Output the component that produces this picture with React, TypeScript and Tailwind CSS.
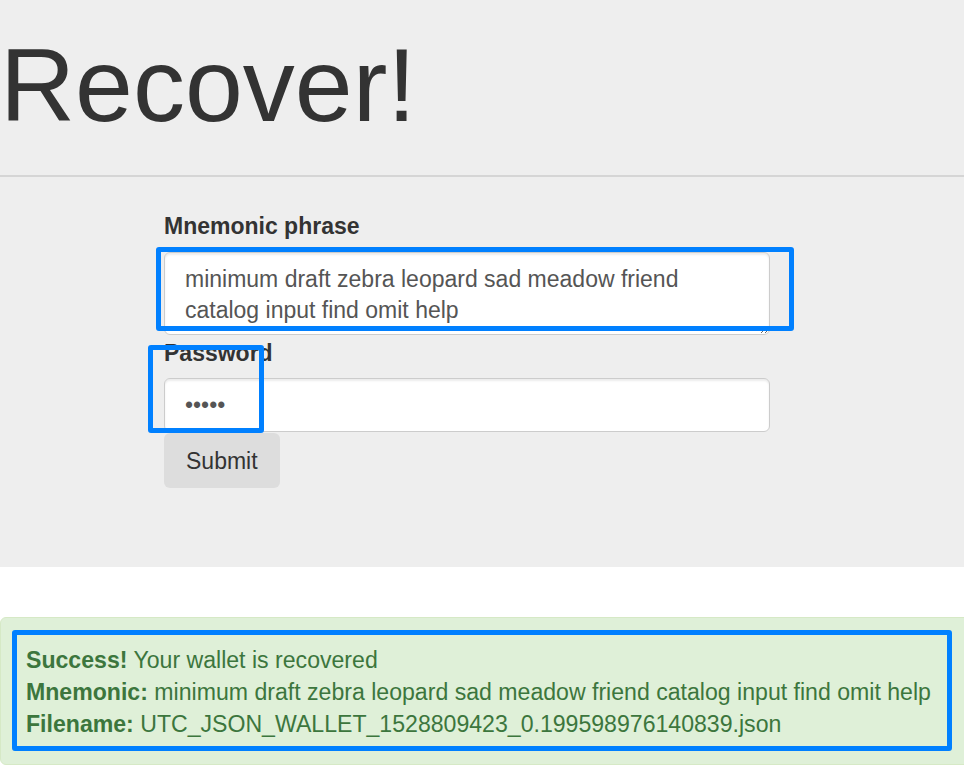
import { useState } from 'react';

const MNEMONIC = 'minimum draft zebra leopard sad meadow friend catalog input find omit help';

export default function App() {
  const [phrase, setPhrase] = useState(MNEMONIC);
  const [password, setPassword] = useState('12345');

  return (
    <div className="relative w-full h-[767px] overflow-hidden bg-white text-[#333] font-['Liberation_Sans',Arial,sans-serif]">
      {/* jumbotron */}
      <div className="bg-[#eee] pt-[28px] pb-[79px]">
        <h1 className="text-[104px] leading-[114px] font-normal">Recover!</h1>
        <div className="mt-[33px] h-[2px] bg-[#d5d5d5]"></div>

        <form className="ml-[164px] w-[606px] pt-[33px]" onSubmit={(e) => e.preventDefault()}>
          <label htmlFor="mnemonic" className="block text-[23px] leading-[33px] font-bold mb-[9px]">
            Mnemonic phrase
          </label>
          <textarea
            id="mnemonic"
            value={phrase}
            onChange={(e) => setPhrase(e.target.value)}
            className="block w-full h-[83px] overflow-hidden bg-white border border-[#ccc] rounded-[6px] px-[20px] pt-[11px] text-[23px] leading-[31px] text-[#555] shadow-[inset_0_2px_2px_rgba(0,0,0,0.075)] focus:outline-none"
          />

          <label htmlFor="password" className="block mt-[2px] text-[23px] leading-[33px] font-bold mb-[8px]">
            Password
          </label>
          <input
            id="password"
            type="password"
            value={password}
            onChange={(e) => setPassword(e.target.value)}
            className="block w-full h-[54px] bg-white border border-[#ccc] rounded-[6px] px-[20px] text-[23px] text-[#555] shadow-[inset_0_2px_2px_rgba(0,0,0,0.075)] focus:outline-none"
          />

          <button
            type="submit"
            className="mt-[1px] h-[55px] px-[22px] pt-[2px] bg-[#ddd] rounded-[6px] text-[23px] text-[#333]"
          >
            Submit
          </button>
        </form>
      </div>

      {/* success alert */}
      <div className="mt-[50px] w-[990px] bg-[#dff0d8] border border-[#d6e9c6] rounded-[6px] px-[25px] pt-[26px] pb-[24px] text-[23.1px] leading-[32px] text-[#3c763d]">
        <div>
          <strong>Success!</strong> Your wallet is recovered
        </div>
        <div>
          <strong>Mnemonic:</strong> {MNEMONIC}
        </div>
        <div>
          <strong>Filename:</strong> UTC_JSON_WALLET_1528809423_0.199598976140839.json
        </div>
      </div>

      {/* highlight boxes */}
      <div className="absolute left-[156px] top-[247px] w-[638px] h-[84px] border-[5px] border-[#0080ff] rounded-[3px] pointer-events-none"></div>
      <div className="absolute left-[148px] top-[345px] w-[116px] h-[88px] border-[5px] border-[#0080ff] rounded-[3px] pointer-events-none"></div>
      <div className="absolute left-[12px] top-[630px] w-[940px] h-[121px] border-[5px] border-[#0080ff] rounded-[3px] pointer-events-none"></div>
    </div>
  );
}
